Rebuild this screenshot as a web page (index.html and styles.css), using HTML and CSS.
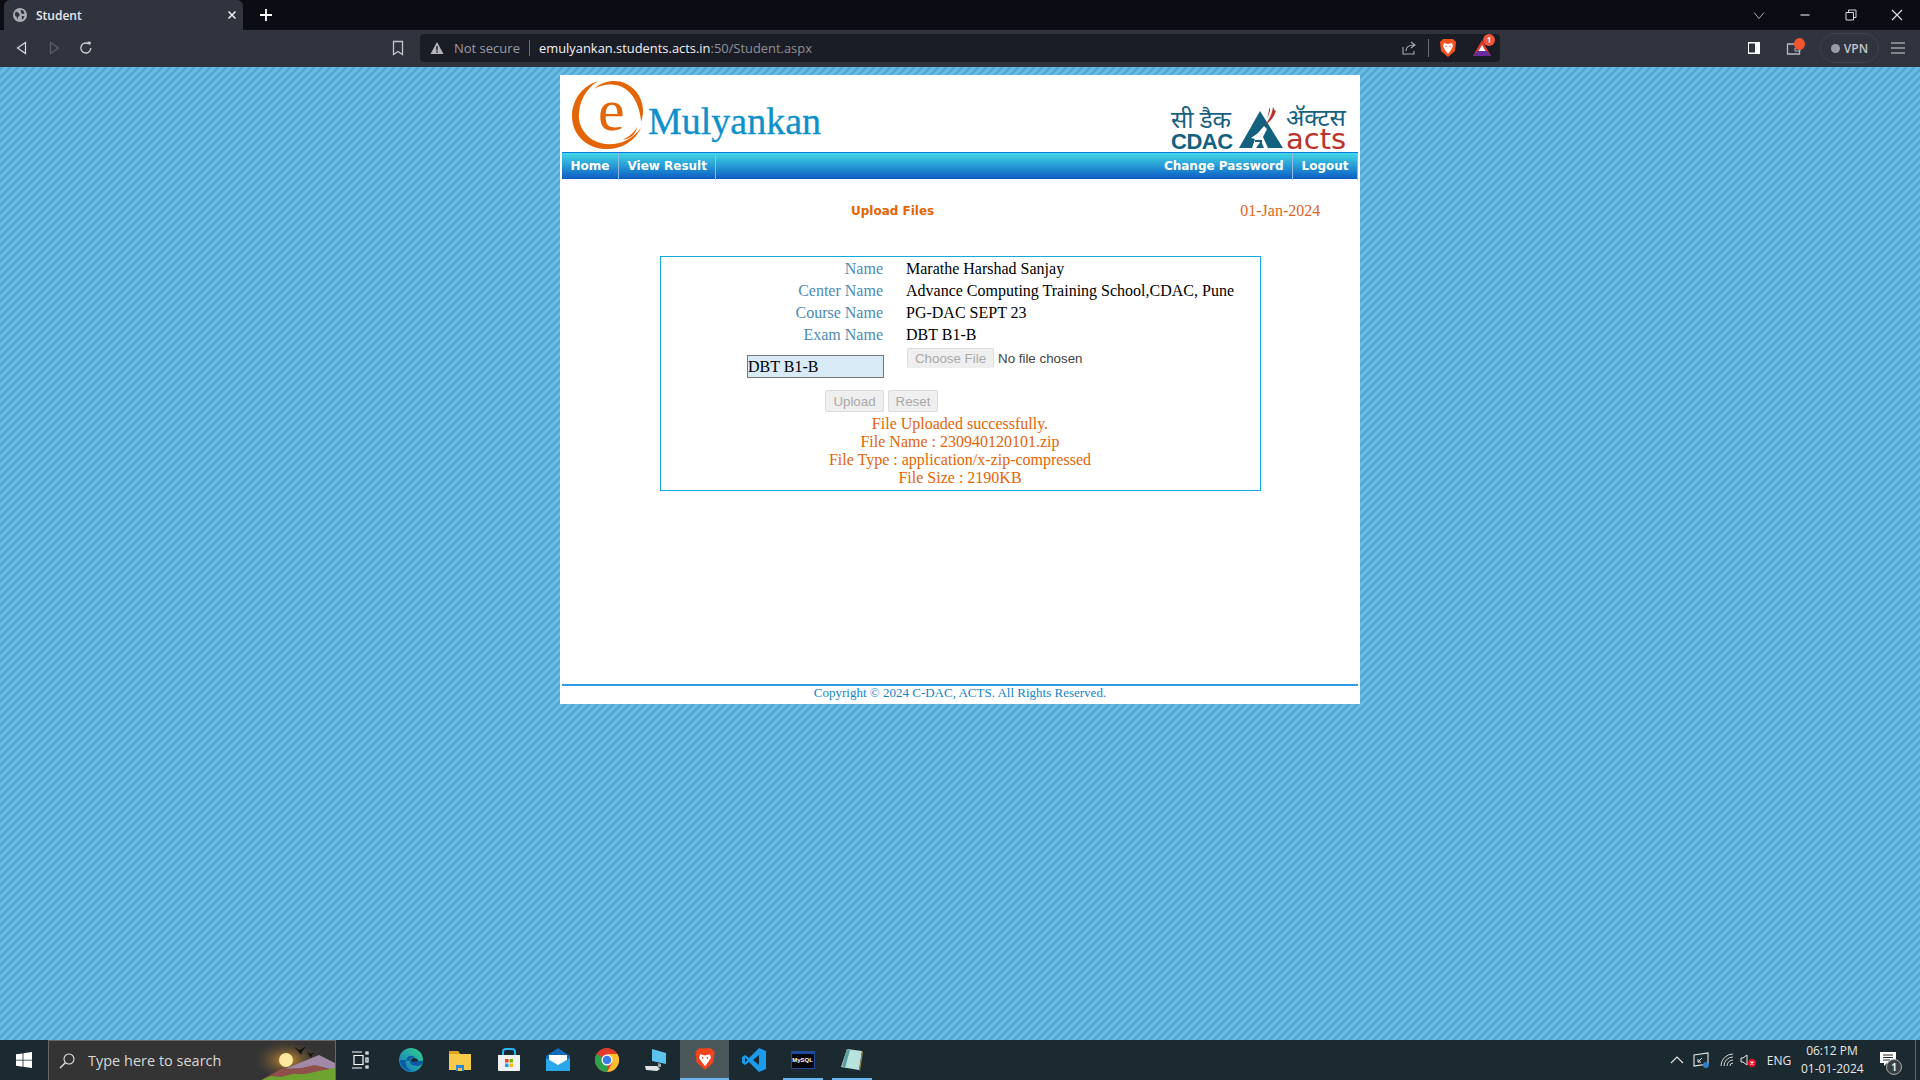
FILE: index.html
```html
<!DOCTYPE html>
<html lang="en">
<head>
<meta charset="utf-8">
<title>Student</title>
<link rel="stylesheet" href="styles.css">
</head>
<body>
<div class="tabbar">
  <div class="tab">
    <svg class="ico14" viewBox="0 0 16 16"><circle cx="8" cy="8" r="8" fill="#a9acb3"/><path d="M3 4l3 1 2 3-2 2-1 3-1-3-2-2zM9 2l3 1 1 3-2 1-2-2zM10 9l3 0-1 3-2 1z" fill="#30343f"/></svg>
    <span class="tab-title">Student</span>
    <svg class="ico10" viewBox="0 0 10 10"><path d="M1.500 1.500l7 7M8.500 1.500l-7 7" stroke="#e8e8ea" stroke-width="1.600"/></svg>
  </div>
  <div class="newtab"><svg class="ico14" viewBox="0 0 14 14"><path d="M7 1v12M1 7h12" stroke="#fff" stroke-width="1.800"/></svg></div>
  <div class="winctl first"><svg class="ico12" viewBox="0 0 12 12"><path d="M1 3.500l5 6 5-6" fill="none" stroke="#a8aab0" stroke-width="1"/></svg></div>
  <div class="winctl"><svg class="ico12" viewBox="0 0 12 12"><path d="M1.500 6h9" stroke="#d8d8dc" stroke-width="1.200"/></svg></div>
  <div class="winctl"><svg class="ico12" viewBox="0 0 12 12"><path d="M1 3.500h7.500v7.500h-7.500zM3.500 3.500v-2.500h7.500v7.500h-2.500" fill="none" stroke="#d8d8dc" stroke-width="1"/></svg></div>
  <div class="winctl"><svg class="ico12" viewBox="0 0 12 12"><path d="M1 1l10 10M11 1l-10 10" stroke="#e4e4e8" stroke-width="1.100"/></svg></div>
</div>

<div class="toolbar">
  <div class="tool first"><svg class="ico16" viewBox="0 0 16 16"><path d="M11.500 2.500v11l-8-5.500z" fill="none" stroke="#d5d6da" stroke-width="1.300"/></svg></div>
  <div class="tool"><svg class="ico16" viewBox="0 0 16 16"><path d="M4.500 2.500v11l8-5.500z" fill="none" stroke="#5c5f6b" stroke-width="1.300"/></svg></div>
  <div class="tool"><svg class="ico16" viewBox="0 0 16 16"><path d="M12.800 8a5 5 0 1 1-2-4" fill="none" stroke="#d5d6da" stroke-width="1.300"/><path d="M9.500 1.500l3.500 0.500-1 3.500z" fill="#d5d6da"/></svg></div>
  <div class="tool bookmark"><svg class="ico16" viewBox="0 0 16 16"><path d="M3.500 1.500h9v13l-4.500-3-4.500 3z" fill="none" stroke="#c4c5cb" stroke-width="1.300"/></svg></div>
  <div class="urlbox">
    <svg class="ico14" viewBox="0 0 14 14"><path d="M7 1l6.500 12h-13z" fill="#b4b6bc"/><path d="M6.300 5h1.400v4.500h-1.400zM6.300 10.300h1.400v1.400h-1.400z" fill="#1b1d26"/></svg>
    <span class="not-secure">Not secure</span>
    <span class="url-div"></span>
    <span class="url"><b class="host">emulyankan.students.acts.in</b>:50/Student.aspx</span>
    <svg class="ico16 share" viewBox="0 0 16 16"><path d="M2 7v7h11v-3" fill="none" stroke="#a8aab0" stroke-width="1.100"/><path d="M5 11c0-4 3-6 8-6M10 2l4 3-4 3" fill="none" stroke="#a8aab0" stroke-width="1.100"/></svg>
    <span class="url-div right"></span>
    <svg class="ico18 lion" viewBox="0 0 18 20"><path d="M4 1h10l3 3-1 9-7 6-7-6-1-9z" fill="#f1531f"/><path d="M5 5l4 1 4-1 1 3-2 4-3 4-3-4-2-4z" fill="#fff"/><path d="M6 7.500l2 1-1 1zM12 7.500l-2 1 1 1z" fill="#f1531f"/></svg>
    <span class="rewards">
      <svg class="ico18" viewBox="0 0 18 18"><path d="M9 1l9 16h-18z" fill="#e23b2a"/><path d="M0 17l4-5h10l4 5z" fill="#6a2b9e"/><path d="M9 6l3.500 6h-7z" fill="#fff"/></svg>
      <span class="badge">1</span>
    </span>
  </div>
  <div class="tool sidebar"><svg class="ico14" viewBox="0 0 14 14"><rect x="1" y="1" width="12" height="12" fill="#fff"/><rect x="2" y="2.500" width="6" height="9" fill="#30343f"/></svg></div>
  <div class="tool wallet">
    <svg class="ico16" viewBox="0 0 16 16"><path d="M1.500 4h12v10h-12z" fill="none" stroke="#b6b8be" stroke-width="1.300"/><path d="M9 8h5v3h-5z" fill="none" stroke="#b6b8be"/></svg>
    <span class="dot"></span>
  </div>
  <div class="vpn"><span class="vpn-dot"></span>VPN</div>
  <div class="tool menu"><svg class="ico14" viewBox="0 0 14 14"><path d="M0 2h14M0 7h14M0 12h14" stroke="#d5d6da" stroke-width="1.200"/></svg></div>
</div>

<main class="page">
  <div class="sheet">
    <header class="head">
      <div class="brand">
        <span class="logo">
          <svg class="logo-ring" viewBox="0 0 80 74">
            <path d="M29 2C10 8 2 24 2 38c0 20 16 34 36 34 16 0 29-9 35-22-8 11-20 17-33 17C22 67 9 53 9 38 9 23 17 9 29 2z" fill="#e36505"/>
            <path d="M25 10C31 4 39 2 45 2c17 0 30 14 30 31 0 4-1 8-2 11-1-14-8-36-28-38-8-1-14 1-20 4z" fill="#e36505"/>
            <path d="M54 62c6-2 12-7 15-13-1 7-7 13-15 13z" fill="#e36505"/>
          </svg>
          <span class="logo-e">e</span>
        </span>
        <span class="brand-name">Mulyankan</span>
      </div>
      <div class="partner">
        <div class="stack cdac">
          <span class="hi-cdac">सी डैक</span>
          <span class="en-cdac">CDAC</span>
        </div>
        <svg class="tri" viewBox="0 0 46 44">
          <path d="M22 5l23 37H1z" fill="#14617f"/>
          <path d="M20 27l6-7 3 3-4 8 5 11h-4l-3-7-5 7h-4l3-9-4-1 7-5z" fill="#fff"/>
          <path d="M17 34h7v8h-2v-6h-5z" fill="#14617f"/>
          <path d="M35 1c-1 7-4 13-8 18 6-4 10-9 11-15l-1 1z" fill="#b5322a"/>
          <path d="M31 2c0 4-1 7-2 10 2-3 3-6 3-9z" fill="#b5322a"/>
        </svg>
        <div class="stack acts">
          <span class="hi-acts">ॲक्टस</span>
          <span class="en-acts">acts</span>
        </div>
      </div>
    </header>
    <nav class="menu-bar">
      <a class="nav-item">Home</a>
      <a class="nav-item">View Result</a>
      <span class="nav-fill"></span>
      <a class="nav-item">Change Password</a>
      <a class="nav-item">Logout</a>
    </nav>
    <div class="title-row">
      <span class="title">Upload Files</span>
      <span class="date">01-Jan-2024</span>
    </div>
    <section class="panel">
      <div class="grid">
        <span class="lbl">Name</span><span class="val">Marathe Harshad Sanjay</span>
        <span class="lbl">Center Name</span><span class="val">Advance Computing Training School,CDAC, Pune</span>
        <span class="lbl">Course Name</span><span class="val">PG-DAC SEPT 23</span>
        <span class="lbl">Exam Name</span><span class="val">DBT B1-B</span>
        <span class="input-cell"><span class="exam-input">DBT B1-B</span></span>
        <span class="file-cell"><button class="btn choose" disabled>Choose File</button><span class="nofile">No file chosen</span></span>
      </div>
      <div class="actions">
        <button class="btn upload" disabled>Upload</button>
        <button class="btn reset" disabled>Reset</button>
      </div>
      <div class="messages">
        <div>File Uploaded successfully.</div>
        <div>File Name : 230940120101.zip</div>
        <div>File Type : application/x-zip-compressed</div>
        <div>File Size : 2190KB</div>
      </div>
    </section>
    <footer class="foot">Copyright © 2024 C-DAC, ACTS. All Rights Reserved.</footer>
  </div>
</main>

<div class="taskbar">
  <div class="start"><svg class="ico16" viewBox="0 0 16 16"><path d="M0 2.300l6.600-.9v6.300H0zM7.400 1.300L16 0v7.700H7.400zM0 8.400h6.600v6.300L0 13.800zM7.400 8.400H16V16l-8.600-1.200z" fill="#fff"/></svg></div>
  <div class="search">
    <svg class="ico16" viewBox="0 0 16 16"><circle cx="10" cy="6" r="5" fill="none" stroke="#e8e8e8" stroke-width="1.100"/><path d="M6.300 9.700L1 15" stroke="#e8e8e8" stroke-width="1.300"/></svg>
    <span class="search-text">Type here to search</span>
    <svg class="search-art" viewBox="0 0 78 40">
      <defs><radialGradient id="glow"><stop offset="0" stop-color="#d9952f"/><stop offset="1" stop-color="#343434" stop-opacity="0"/></radialGradient></defs>
      <ellipse cx="30" cy="19" rx="36" ry="21" fill="url(#glow)"/>
      <circle cx="29" cy="19" r="7" fill="#fde9a0"/>
      <path d="M14 34l26-11 22-9 16 8v18H14z" fill="#a08aa6"/>
      <path d="M6 38l18-10 20-1 14-3 20 5v11H6z" fill="#8f4f4a"/>
      <path d="M2 40l12-5 10 1 12-3 12 0 14-3 16-3v13z" fill="#6fa32f"/>
      <path d="M37 6l6 3 6-4-4 6-1 3-3-4zM50 11l4 2 4-2-3 3-1 3-2-3z" fill="#111"/>
    </svg>
  </div>
  <div class="task taskview"><svg class="ico18" viewBox="0 0 18 18"><path d="M1 1h10M1 17h10M3 4.500h9v9H3z M15 1h2v2h-2zM15 7h2v4h-2zM15 15h2v2h-2z" fill="none" stroke="#fff" stroke-width="1.200"/></svg></div>
  <div class="task"><svg class="ico24" viewBox="0 0 24 24"><defs><linearGradient id="edge" x1="0" y1="1" x2="1" y2="0"><stop offset="0" stop-color="#1173c8"/><stop offset="1" stop-color="#33d28a"/></linearGradient></defs><circle cx="12" cy="12" r="12" fill="url(#edge)"/><path d="M24 13c0 3-3 5-6 5-5 0-8-3-7-6 1-2 3-3 5-2-1-3-6-3-8 0-3 4-1 11 5 13-7 0-12-5-12-11" fill="#0c59a4"/><path d="M15 10c2 0 4 1 4 3-2 1-5 1-7 0 0-2 1-3 3-3z" fill="#1a2a30"/></svg></div>
  <div class="task"><svg class="ico24" viewBox="0 0 24 24"><path d="M1 3h9l2 3h11v16H1z" fill="#f7c948"/><path d="M1 3h9l2 3H1z" fill="#e3a21a"/><path d="M8 17h8v6H8z" fill="#2b88d8"/><path d="M10 20h4v3h-4z" fill="#f7c948"/></svg></div>
  <div class="task"><svg class="ico24" viewBox="0 0 24 24"><path d="M6 7V4q0-3 3-3h6q3 0 3 3v3" fill="none" stroke="#29b6f6" stroke-width="2"/><path d="M1 7h22v15q0 1-1 1H2q-1 0-1-1z" fill="#f2f2f2"/><path d="M8 11h3.500v3.500H8z" fill="#e8461e"/><path d="M12.500 11H16v3.500h-3.500z" fill="#7ab800"/><path d="M8 15.500h3.500V19H8z" fill="#1da1f2"/><path d="M12.500 15.500H16V19h-3.500z" fill="#fdb900"/></svg></div>
  <div class="task"><svg class="ico24" viewBox="0 0 24 24"><path d="M0 8l12-8 12 8v15H0z" fill="#0f6cbd"/><path d="M3 7h18v6l-9 5-9-5z" fill="#fff"/><path d="M0 10l12 7 12-7v13H0z" fill="#28a8ea"/></svg></div>
  <div class="task"><svg class="ico24" viewBox="0 0 24 24"><circle cx="12" cy="12" r="12" fill="#e33b2e"/><path d="M12 12L1.600 18A12 12 0 0 0 12 24z" fill="#2fa14a"/><path d="M1.600 18A12 12 0 0 1 1.600 6L12 12l-5 8.500z" fill="#2fa14a"/><path d="M12 6h10.400A12 12 0 0 1 12 24l5.200-9z" fill="#fbc02d"/><circle cx="12" cy="12" r="5.500" fill="#fff"/><circle cx="12" cy="12" r="4.300" fill="#3b7de8"/></svg></div>
  <div class="task"><svg class="ico24" viewBox="0 0 24 24"><path d="M8 1l14 4v11l-14-3z" fill="#5cc3ef"/><path d="M14 15l3 1v3h-3z" fill="#9aa"/><path d="M1 18l12 0 3 3-3 2-11-1z" fill="#dfe3e6"/></svg></div>
  <div class="task active"><svg class="ico24" viewBox="0 0 18 20"><path d="M4 1h10l3 3-1 9-7 6-7-6-1-9z" fill="#f1431c"/><path d="M5 6l4 1 4-1 1 3-2 3-3 4-3-4-2-3z" fill="#fff"/><path d="M6 8l2 1-1 1zM12 8l-2 1 1 1z" fill="#f1431c"/></svg></div>
  <div class="task"><svg class="ico24" viewBox="0 0 24 24"><path d="M17 0l7 3v18l-7 3-10-10-4 3-3-2V9l3-2 4 3z" fill="#1a9bec"/><path d="M17 7l-6 5 6 5zM3 9.500v5l2.500-2.500z" fill="#1a2a30"/></svg></div>
  <div class="task running"><span class="mysql">MySQL</span></div>
  <div class="task running"><svg class="ico24" viewBox="0 0 24 24"><path d="M7 1l15 2-3 19-18-3z" fill="#b7e3de"/><path d="M2 18l5-17 3 1-5 18z" fill="#5f9ea0"/><path d="M19 22l3-19 1 1-3 19z" fill="#a5803e"/></svg></div>
  <div class="tray">
    <svg class="ico14 t-chev" viewBox="0 0 14 14"><path d="M1 10l6-6 6 6" fill="none" stroke="#e8e8e8" stroke-width="1.100"/></svg>
    <svg class="ico16 t-screen" viewBox="0 0 16 16"><path d="M1 3l14-2v11l-14 2z" fill="none" stroke="#e8e8e8" stroke-width="1.100"/><path d="M5 10l4-4M5 7v3h3" fill="none" stroke="#e8e8e8"/><circle cx="13" cy="13" r="3" fill="#2f7ccc"/></svg>
    <svg class="ico14 t-wifi" viewBox="0 0 14 14"><path d="M1 13a12 12 0 0 1 12-12M4 13a9 9 0 0 1 9-9M7 13a6 6 0 0 1 6-6M10 13a3 3 0 0 1 3-3" fill="none" stroke="#d8d8d8" stroke-width="1"/></svg>
    <svg class="ico16 t-sound" viewBox="0 0 16 16"><path d="M1 6h2l4-3v10l-4-3H1z" fill="none" stroke="#e8e8e8"/><circle cx="12" cy="11" r="4" fill="#e81123"/><path d="M10.500 9.500l3 3M13.500 9.500l-3 3" stroke="#fff" stroke-width="1.100"/></svg>
    <span class="lang">ENG</span>
    <div class="clock"><div>06:12 PM</div><div>01-01-2024</div></div>
    <span class="notif">
      <svg class="ico16" viewBox="0 0 16 16"><path d="M0 0h16v11H7l-3 3v-3H0z" fill="#fff"/><path d="M3 3h10M3 5.500h10M3 8h7" stroke="#1a2a30"/></svg>
      <span class="notif-badge">1</span>
    </span>
    <span class="desk-edge"></span>
  </div>
</div>
</body>
</html>
```

FILE: styles.css
```css
* { box-sizing: border-box; }
html, body { margin: 0; height: 100%; }
body {
  width: 1920px; height: 1080px; overflow: hidden;
  display: flex; flex-direction: column;
  font-family: "Liberation Serif", serif;
}
svg { display: block; flex: none; }
.ico10 { width: 10px; height: 10px; }
.ico12 { width: 12px; height: 12px; }
.ico14 { width: 14px; height: 14px; }
.ico16 { width: 16px; height: 16px; }
.ico18 { width: 18px; height: 18px; }
.ico24 { width: 24px; height: 24px; }

/* tab strip */
.tabbar { height: 30px; flex: none; background: #0b0c14; display: flex; align-items: flex-end; padding-left: 4px; }
.tab { width: 239px; height: 30px; background: #30343f; border-radius: 6px 6px 0 0; display: flex; align-items: center; padding: 0 6px 0 9px; }
.tab-title { font: 600 12px "Open Sans", sans-serif; color: #e9e9ec; margin-left: 9px; flex: 1; }
.newtab { width: 30px; height: 30px; margin-left: 8px; display: flex; align-items: center; justify-content: center; }
.winctl { width: 46px; height: 30px; display: flex; align-items: center; justify-content: center; }
.winctl.first { margin-left: auto; }

/* toolbar */
.toolbar { height: 37px; flex: none; background: #30343f; display: flex; align-items: center; padding: 0 0 1px 6px; }
.tool { width: 32px; height: 28px; display: flex; align-items: center; justify-content: center; position: relative; }
.bookmark { margin-left: 280px; }
.urlbox { width: 1080px; height: 28px; margin-left: 6px; background: #1b1d26; border-radius: 4px; display: flex; align-items: center; padding-left: 10px; font: 13px "Open Sans", sans-serif; }
.not-secure { color: #9a9ca5; margin-left: 10px; width: 67px; font-size: 13px; white-space: nowrap; }
.url-div { width: 1px; height: 16px; background: #6a6c76; margin-left: 8px; }
.url { color: #8e9099; margin-left: 9px; width: 861px; white-space: nowrap; font-size: 12.900px; }
.host { color: #f2f2f4; font-weight: 400; }
.share { margin-left: 1px; }
.url-div.right { margin-left: 11px; height: 18px; }
.lion { margin-left: 10px; height: 20px; }
.rewards { position: relative; margin-left: 16px; }
.badge { position: absolute; top: -5px; right: -4px; width: 12px; height: 12px; border-radius: 50%; background: #f1543a; color: #fff; font: 700 8px/12px "Open Sans", sans-serif; text-align: center; }
.sidebar { margin-left: 238px; }
.wallet { margin-left: 8px; }
.dot { position: absolute; top: 4px; right: 5px; width: 11px; height: 12px; border-radius: 50%; background: #f2542d; }
.vpn { width: 59px; height: 30px; margin-left: 10px; border: 1px solid #3f4350; border-radius: 15px; display: flex; align-items: center; justify-content: center; gap: 4px; font: 600 12px "Open Sans", sans-serif; color: #c5c7cd; }
.vpn-dot { width: 9px; height: 9px; border-radius: 50%; background: #9a9ca5; }
.menu { margin-left: 3px; }

/* page */
.page {
  flex: 1; min-height: 0; padding-top: 8px;
  background-color: #6cbbe3;
  background-image: linear-gradient(135deg, #55a9d6 25%, #6cbbe3 25%, #6cbbe3 50%, #55a9d6 50%, #55a9d6 75%, #6cbbe3 75%);
  background-size: 8px 8px;
}
.sheet { width: 800px; height: 629px; margin: 0 auto; background: #fff; padding: 0 2px; display: flex; flex-direction: column; }
.head { height: 77px; flex: none; display: flex; justify-content: space-between; align-items: flex-start; }
.brand { display: flex; align-items: flex-start; margin-left: 8px; }
.logo { position: relative; display: block; width: 78px; height: 72px; margin-top: 4px; }
.logo-ring { width: 78px; height: 72px; }
.logo-e { position: absolute; left: 28px; top: 1px; font: 60px/60px "Liberation Serif", serif; color: #e36505; }
.brand-name { font: 38px/44px "Liberation Serif", serif; color: #0e90cb; margin: 24px 0 0 0; -webkit-text-stroke: 0.3px #0e90cb; }

.partner { display: flex; margin: 31px 12px 0 0; align-items: flex-start; }
.stack { width: 60px; display: flex; flex-direction: column; white-space: nowrap; }
.cdac span, .acts span { display: block; }
.hi-cdac { font: 400 24px/25px "Noto Sans", "Noto Sans Devanagari", "DejaVu Sans", sans-serif; color: #1a6080; height: 27px; }
.en-cdac { font: 700 22px/17px "Liberation Sans", sans-serif; letter-spacing: -0.500px; color: #14617f; height: 17px; }
.tri { width: 46px; height: 44px; margin-left: 7px; }
.acts { margin-left: 2px; }
.hi-acts { font: 400 24px/21px "Noto Sans", "Noto Sans Devanagari", "DejaVu Sans", sans-serif; color: #14617f; height: 22px; }
.en-acts { font: 400 29px/22px "DejaVu Sans", sans-serif; color: #b9322b; height: 22px; }

.menu-bar { height: 27px; flex: none; display: flex; align-items: stretch; background: linear-gradient(#42d8e6, #0b5cc4); border-top: 1px solid #0e78e0; }
.nav-item { font: 700 12px/27px "DejaVu Sans", sans-serif; color: #fff; padding: 0 8.500px; border-right: 1px solid #8fbbe6; white-space: nowrap; height: 27px; }
.nav-fill { flex: 1; }

.title-row { display: flex; height: 77px; flex: none; padding-top: 23px; }
.title { font: 700 12px/18px "DejaVu Sans", sans-serif; color: #e36505; margin-left: 289px; }
.date { font: 16px/18px "Liberation Serif", serif; color: #e0641c; margin-left: 306px; }

.panel { width: 601px; height: 235px; flex: none; margin-left: 98px; border: 1px solid #11a9dd; padding-top: 1px; font-size: 16px; }
.grid { display: grid; grid-template-columns: 222px 1fr; grid-auto-rows: 22px; column-gap: 23px; }
.lbl { color: #4b8ab5; text-align: right; line-height: 22px; }
.val { color: #000; line-height: 22px; white-space: nowrap; }
.input-cell { display: flex; justify-content: flex-end; padding-top: 9px; height: 34px; margin-right: -1px; }
.exam-input { width: 137px; height: 23px; background: #d8eaf5; border: 1px solid #767676; font-size: 16px; line-height: 21px; color: #000; }
.file-cell { display: flex; align-items: flex-start; padding: 2px 0 0 1px; height: 34px; }
.btn { font: 13.330px "Liberation Sans", sans-serif; color: #a9a9a9; background: #efefef; border: 1px solid #dcdcdc; border-radius: 2px; padding: 0; }
.choose { width: 87px; height: 20px; border-bottom: 0; }
.nofile { font: 13.330px/20px "Liberation Sans", sans-serif; color: #444; margin: 1px 0 0 4px; }
.actions { display: flex; gap: 4px; margin: 22px 0 0 164px; }
.upload { width: 59px; height: 22px; }
.reset { width: 50px; height: 22px; }
.messages { margin-top: 3px; text-align: center; color: #e36505; line-height: 18px; padding-right: 1px; }

.foot { margin-top: auto; height: 20px; border-top: 2px solid #2f9be8; text-align: center; font-size: 13px; line-height: 13px; color: #1384c6; }

/* taskbar */
.taskbar { height: 40px; flex: none; background: #1a2a30; display: flex; align-items: stretch; font-family: "Open Sans", sans-serif; color: #e8e8e8; }
.start { width: 48px; display: flex; align-items: center; justify-content: center; }
.search { width: 288px; background: #343434; border: 1px solid #666; border-bottom: 0; display: flex; align-items: center; padding-left: 10px; position: relative; overflow: hidden; }
.search-text { font: 14.500px "Open Sans", sans-serif; color: #d8d8d8; margin-left: 13px; white-space: nowrap; }
.search-art { position: absolute; right: 0; top: 0; width: 78px; height: 40px; }
.task { width: 49px; display: flex; align-items: center; justify-content: center; position: relative; }
.taskview { width: 50px; padding-right: 2px; }
.active { background: #4a585c; border-bottom: 2px solid #6cb4ee; }
.running::after { content: ""; position: absolute; left: 5px; right: 4px; bottom: 0; height: 2px; background: #6cb4ee; }
.mysql { width: 24px; height: 18px; background: #05070d; border: 1px solid #1d4d9a; border-top-width: 3px; font: 700 6px/13px "Liberation Sans", sans-serif; color: #fff; white-space: nowrap; text-align: center; }
.tray { flex: 1; display: flex; align-items: center; padding-left: 794px; }
.t-screen { margin-left: 9px; }
.t-wifi { margin-left: 11px; }
.t-sound { margin-left: 6px; }
.lang { font: 12px "Open Sans", sans-serif; margin-left: 9px; width: 28px; text-align: center; }
.clock { font: 12px/18px "Open Sans", sans-serif; text-align: center; width: 62px; margin-left: 8px; white-space: nowrap; flex: none; }
.notif { position: relative; margin-left: 17px; display: block; }
.notif-badge { position: absolute; left: 6px; top: 7px; width: 16px; height: 16px; border-radius: 50%; background: #3a3f42; border: 1px solid #aaa; font: 700 10px/14px "Open Sans", sans-serif; text-align: center; color: #eee; }
.desk-edge { width: 1px; height: 40px; background: #5a6a70; margin-left: 19px; flex: none; }
```
